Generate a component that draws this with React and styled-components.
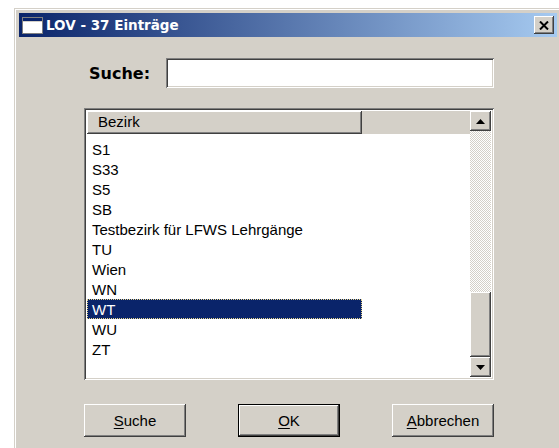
import React from 'react';
import styled, { createGlobalStyle, css } from 'styled-components';

const GlobalStyle = createGlobalStyle`
  html, body {
    margin: 0;
    padding: 0;
    background: #ffffff;
    overflow: hidden;
  }
`;

const raised = css`
  box-shadow:
    inset -1px -1px #404040,
    inset 1px 1px #ffffff,
    inset -2px -2px #808080,
    inset 2px 2px #d4d0c8;
`;

const sunken = css`
  box-shadow:
    inset 1px 1px #808080,
    inset -1px -1px #ffffff,
    inset 2px 2px #404040,
    inset -2px -2px #d4d0c8;
`;

const Window = styled.div`
  margin: 8px 0 0 14px;
  width: 548px;
  height: 460px;
  box-sizing: border-box;
  background: #d4d0c8;
  padding: 5px;
  box-shadow:
    inset 1px 1px #d4d0c8,
    inset 2px 2px #ffffff,
    inset -1px -1px #404040,
    inset -2px -2px #808080;
  display: flex;
  flex-direction: column;
`;

const TitleBar = styled.div`
  height: 24px;
  display: flex;
  align-items: center;
  padding: 0 3px;
  background: linear-gradient(to right, #0a246a, #a6caf0);
`;

const TitleText = styled.span`
  flex: 1;
  margin-left: 3px;
  color: #ffffff;
  font-family: "DejaVu Sans", sans-serif;
  font-weight: bold;
  font-size: 13.5px;
`;

const CloseButton = styled.div`
  width: 20px;
  height: 18px;
  background: #d4d0c8;
  display: flex;
  align-items: center;
  justify-content: center;
  ${raised}
`;

const Content = styled.div`
  padding: 21px 0 0 65px;
  width: 410px;
  display: flex;
  flex-direction: column;
`;

const SearchRow = styled.div`
  display: flex;
  align-items: center;
  padding-left: 5px;
  gap: 16px;
`;

const Label = styled.label`
  font-family: "DejaVu Sans", sans-serif;
  font-weight: bold;
  font-size: 16px;
  color: #000000;
`;

const SearchInput = styled.div`
  flex: 1;
  height: 30px;
  background: #ffffff;
  ${sunken}
`;

const ListBox = styled.div`
  margin-top: 20px;
  height: 272px;
  box-sizing: border-box;
  padding: 3px;
  background: #ffffff;
  display: flex;
  ${sunken}
`;

const ListMain = styled.div`
  flex: 1;
  display: flex;
  flex-direction: column;
`;

const HeaderRow = styled.div`
  height: 23px;
  background: #d4d0c8;
  display: flex;
`;

const HeaderCell = styled.div`
  width: ${p => p.$width}px;
  box-sizing: border-box;
  padding: 0 0 2px 11px;
  display: flex;
  align-items: center;
  font-family: "Liberation Sans", sans-serif;
  font-size: 15px;
  color: #000000;
  ${raised}
`;

const Rows = styled.div`
  padding-top: 5px;
  display: flex;
  flex-direction: column;
`;

const Row = styled.div`
  width: 275px;
  height: 20px;
  box-sizing: border-box;
  padding-left: 5px;
  display: flex;
  align-items: center;
  font-family: "Liberation Sans", sans-serif;
  font-size: 15px;
  color: ${p => (p.$selected ? '#ffffff' : '#000000')};
  background: ${p => (p.$selected ? '#0a246a' : 'transparent')};
  ${p => p.$selected && css`
    outline: 1px dotted #e6d48a;
    outline-offset: -1px;
  `}
`;

const ScrollBar = styled.div`
  width: 21px;
  display: flex;
  flex-direction: column;
`;

const ScrollButton = styled.div`
  height: 20px;
  background: #d4d0c8;
  display: flex;
  align-items: center;
  justify-content: center;
  ${raised}
`;

const Track = styled.div`
  flex: 1;
  background: repeating-conic-gradient(#d4d0c8 0 25%, #ffffff 0 50%) 0 0 / 2px 2px;
`;

const Thumb = styled.div`
  height: 65px;
  background: #d4d0c8;
  ${raised}
`;

const ButtonRow = styled.div`
  margin-top: 24px;
  display: flex;
  justify-content: space-between;
`;

const Button = styled.div`
  width: 102px;
  height: 33px;
  box-sizing: border-box;
  background: #d4d0c8;
  display: flex;
  align-items: center;
  justify-content: center;
  font-family: "Liberation Sans", sans-serif;
  font-size: 15px;
  color: #000000;
  ${raised}
  ${p => p.$default && css`
    border: 1px solid #000000;
  `}

  u {
    text-decoration-thickness: 1px;
    text-underline-offset: 2px;
  }
`;

const WindowIcon = () => (
  <svg width="21" height="17" viewBox="0 0 21 17">
    <rect x="0.5" y="0.5" width="20" height="16" fill="#ffffff" stroke="#808080" />
    <rect x="1" y="1" width="19" height="3" fill="#0a246a" />
    <rect x="1" y="4" width="19" height="1" fill="#d4d0c8" />
  </svg>
);

const CloseGlyph = () => (
  <svg width="10" height="9" viewBox="0 0 10 9">
    <path d="M1 0.5 L9 8.5 M9 0.5 L1 8.5" stroke="#000000" strokeWidth="2" />
  </svg>
);

const Arrow = ({ up }) => (
  <svg width="9" height="5" viewBox="0 0 9 5">
    {up
      ? <path d="M4.5 0 L9 5 L0 5 Z" fill="#000000" />
      : <path d="M0 0 L9 0 L4.5 5 Z" fill="#000000" />}
  </svg>
);

const items = ['S1', 'S33', 'S5', 'SB', 'Testbezirk für LFWS Lehrgänge', 'TU', 'Wien', 'WN', 'WT', 'WU', 'ZT'];

export default function App() {
  return (
    <>
      <GlobalStyle />
      <Window>
        <TitleBar>
          <WindowIcon />
          <TitleText>LOV - 37 Einträge</TitleText>
          <CloseButton><CloseGlyph /></CloseButton>
        </TitleBar>

        <Content>
          <SearchRow>
            <Label>Suche:</Label>
            <SearchInput />
          </SearchRow>

          <ListBox>
            <ListMain>
              <HeaderRow>
                <HeaderCell $width={275}>Bezirk</HeaderCell>
              </HeaderRow>
              <Rows>
                {items.map(item => (
                  <Row key={item} $selected={item === 'WT'}>{item}</Row>
                ))}
              </Rows>
            </ListMain>
            <ScrollBar>
              <ScrollButton><Arrow up /></ScrollButton>
              <Track />
              <Thumb />
              <ScrollButton><Arrow /></ScrollButton>
            </ScrollBar>
          </ListBox>

          <ButtonRow>
            <Button><span><u>S</u>uche</span></Button>
            <Button $default><span><u>O</u>K</span></Button>
            <Button><span><u>A</u>bbrechen</span></Button>
          </ButtonRow>
        </Content>
      </Window>
    </>
  );
}
